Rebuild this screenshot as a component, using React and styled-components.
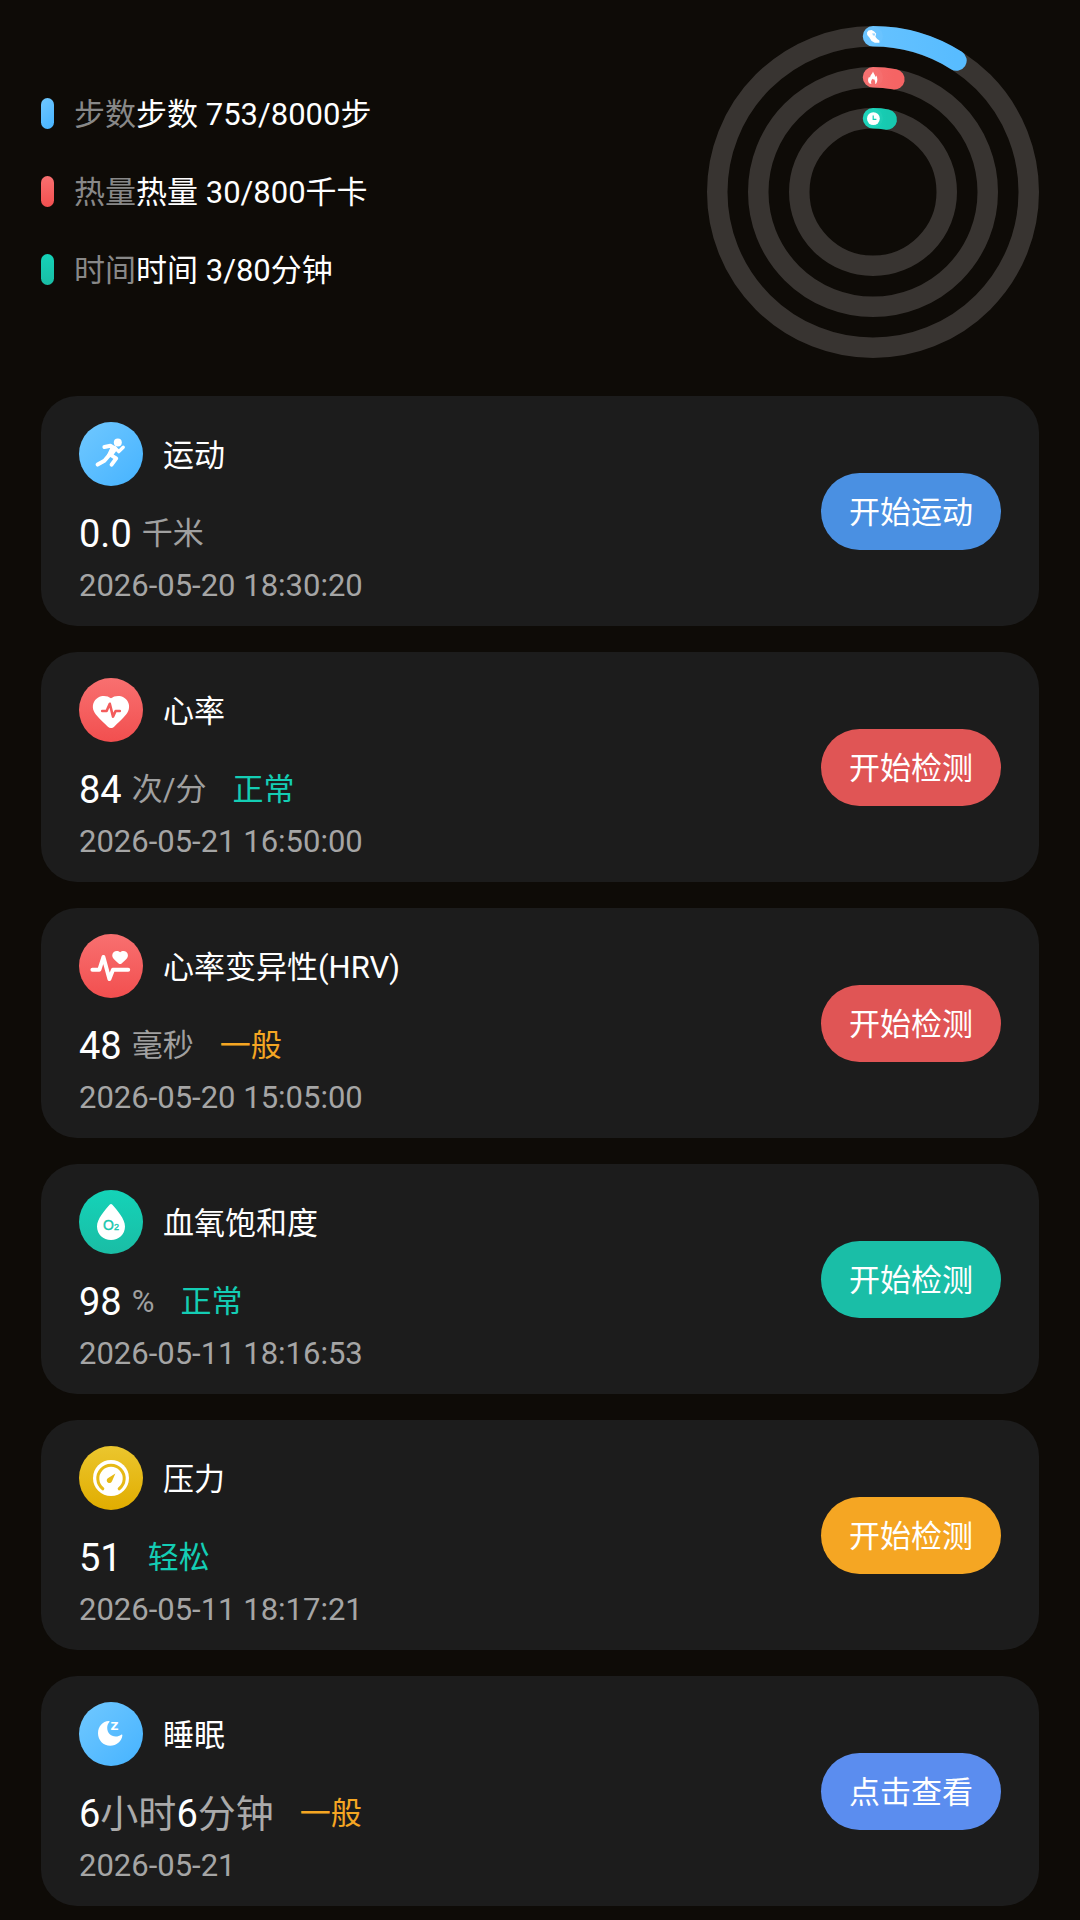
import React from 'react';
import styled, { createGlobalStyle } from 'styled-components';

const GlobalStyle = createGlobalStyle`
  * {
    box-sizing: border-box;
  }

  body {
    margin: 0;
    background: #0e0b07;
    color: #fff;
    font-family: Roboto, "Noto Sans CJK SC", sans-serif;
    font-size: 31px;
  }
`;

const GRADIENTS = {
  blue: 'linear-gradient(135deg, #70c8ff, #46b3ff)',
  red: 'linear-gradient(180deg, #f87070, #f24f4f)',
  teal: 'linear-gradient(180deg, #14d3b8, #1abda5)',
  yellow: 'linear-gradient(180deg, #ebc62e, #e1ad00)',
};

const goals = [
  { label: '步数', text: '753/8000步', tone: 'blue' },
  { label: '热量', text: '30/800千卡', tone: 'red' },
  { label: '时间', text: '3/80分钟', tone: 'teal' },
];

// radius and end angle (degrees, clockwise from the top) of each ring
const rings = [
  { id: 'steps', radius: 155.75, angle: 32.4, from: '#65c2ff', to: '#58bcff' },
  { id: 'heat', radius: 114.75, angle: 10.75, from: '#f66c6c', to: '#f56464' },
  { id: 'time', radius: 73.75, angle: 10.75, from: '#15d2b8', to: '#17c9b0' },
];

const RunIcon = () => (
  <svg viewBox="0 0 64 64" fill="none" stroke="#fff" strokeLinecap="round" strokeLinejoin="round" aria-hidden>
    <circle cx="38.8" cy="20.4" r="4" fill="#fff" stroke="none" />
    <path d="M25.4 25L31.4 23.8L36 26.4" strokeWidth="4" />
    <path d="M35.8 25.6L39.8 29.6L44.2 25.2" strokeWidth="3.4" />
    <path d="M32.4 25.4L36.6 28.6L32.6 34L28.8 33Z" fill="#fff" strokeWidth="1.6" />
    <path d="M30 33.4L25.4 38.8L18.6 42.6" strokeWidth="4" />
    <path d="M32.4 33.4L37.2 36.4L32.6 42.6" strokeWidth="4" />
  </svg>
);

const HeartIcon = () => (
  <svg viewBox="0 0 64 64" fill="none" aria-hidden>
    <path
      d="M32 20.3C28.8 17.6 23.4 17 19.2 19.4C14.4 22.2 12.6 28 14.8 33C16.6 37.2 22.8 43 28.6 48.4C30.8 50.5 33.2 50.5 35.4 48.4C41.2 43 47.4 37.2 49.2 33C51.4 28 49.6 22.2 44.8 19.4C40.6 17 35.2 17.6 32 20.3Z"
      fill="#fff"
    />
    <path
      d="M23.2 33H27.6L30.8 25.8L34 38.6L36.6 33H40.8"
      stroke="#f35c5c"
      strokeWidth="2.6"
      strokeLinecap="round"
      strokeLinejoin="round"
    />
  </svg>
);

const HrvIcon = () => (
  <svg viewBox="0 0 64 64" fill="none" aria-hidden>
    <path
      d="M13.4 35.7H20.4L24.4 23L30.4 45L34 35.7H49.2"
      stroke="#fff"
      strokeWidth="4"
      strokeLinecap="round"
      strokeLinejoin="round"
    />
    <path
      d="M41.1 18.2C39.4 16.6 36.6 16.4 34.8 18C32.8 19.8 32.8 22.6 34.4 24.6C35.8 26.4 37.8 27.8 39.6 29.4C40.6 30.2 41.6 30.2 42.6 29.4C44.4 27.8 46.4 26.4 47.8 24.6C49.4 22.6 49.4 19.8 47.4 18C45.6 16.4 42.8 16.6 41.1 18.2Z"
      fill="#fff"
    />
  </svg>
);

const OxygenIcon = () => (
  <svg viewBox="0 0 64 64" aria-hidden>
    <path
      d="M30.6 14.8C31.4 13.7 32.6 13.7 33.4 14.8C38.4 20.6 46 29 46 36.4C46 44.2 39.8 50 32 50C24.2 50 18 44.2 18 36.4C18 29 25.6 20.6 30.6 14.8Z"
      fill="#fff"
    />
    <text x="24" y="40" fill="#18c7ae" stroke="#18c7ae" strokeWidth="0.4" fontFamily="Liberation Sans, sans-serif" fontSize="14">
      O<tspan fontSize="9">2</tspan>
    </text>
  </svg>
);

const GaugeIcon = () => (
  <svg viewBox="0 0 64 64" fill="none" aria-hidden>
    <circle cx="32" cy="32" r="18" fill="#fff" />
    <path d="M23.8 42.8A13.2 13.2 0 1 1 40.2 42.8" stroke="#e6b915" strokeWidth="3" strokeLinecap="round" />
    <path d="M36.4 27.4L33 35.2A2.7 2.7 0 1 1 28.8 32.2Z" fill="#e6b915" />
  </svg>
);

const SleepIcon = () => (
  <svg viewBox="0 0 64 64" aria-hidden>
    <path
      d="M29.8 19C23.6 19.2 19 24.6 19 31.2C19 38.2 24.4 43.7 31.2 43.7C37.4 43.7 42.8 39.4 43.4 33.2C43.4 32.4 42.8 32.3 42.2 32.7C40.6 33.9 38.8 34.5 36.8 34.5C31.6 34.5 28.2 30.8 28.2 25.8C28.2 23.6 28.8 21.8 30.2 20.2C30.8 19.5 30.6 19 29.8 19Z"
      fill="#fff"
    />
    <text x="31.4" y="28" fill="#fff" fontFamily="DejaVu Sans, sans-serif" fontWeight="700" fontSize="11">Z</text>
  </svg>
);

const cards = [
  {
    title: '运动',
    tone: 'blue',
    icon: <RunIcon />,
    parts: [{ value: '0.0' }, { unit: '千米' }],
    time: '2026-05-20 18:30:20',
    action: '开始运动',
    color: '#4a90e2',
  },
  {
    title: '心率',
    tone: 'red',
    icon: <HeartIcon />,
    parts: [{ value: '84' }, { unit: '次/分' }],
    status: '正常',
    time: '2026-05-21 16:50:00',
    action: '开始检测',
    color: '#e05555',
  },
  {
    title: '心率变异性(HRV)',
    tone: 'red',
    icon: <HrvIcon />,
    parts: [{ value: '48' }, { unit: '毫秒' }],
    status: '一般',
    warn: true,
    time: '2026-05-20 15:05:00',
    action: '开始检测',
    color: '#e05555',
  },
  {
    title: '血氧饱和度',
    tone: 'teal',
    icon: <OxygenIcon />,
    parts: [{ value: '98' }, { unit: '%' }],
    status: '正常',
    time: '2026-05-11 18:16:53',
    action: '开始检测',
    color: '#1abea7',
  },
  {
    title: '压力',
    tone: 'yellow',
    icon: <GaugeIcon />,
    parts: [{ value: '51' }],
    status: '轻松',
    time: '2026-05-11 18:17:21',
    action: '开始检测',
    color: '#f5a623',
  },
  {
    title: '睡眠',
    tone: 'blue',
    icon: <SleepIcon />,
    parts: [{ value: '6', suffix: '小时' }, { value: '6', suffix: '分钟' }],
    joined: true,
    status: '一般',
    warn: true,
    time: '2026-05-21',
    action: '点击查看',
    color: '#5b8def',
  },
];

const arcPath = (r, angle) => {
  const a = (angle * Math.PI) / 180;
  return `M166 ${166 - r}A${r} ${r} 0 0 1 ${166 + r * Math.sin(a)} ${166 - r * Math.cos(a)}`;
};

const Rings = () => (
  <RingChart viewBox="0 0 332 332" fill="none" role="img" aria-label="今日目标">
    <defs>
      {rings.map((ring) => (
        <linearGradient key={ring.id} id={ring.id}>
          <stop offset="0" stopColor={ring.from} />
          <stop offset="1" stopColor={ring.to} />
        </linearGradient>
      ))}
    </defs>
    {rings.map((ring) => (
      <g key={ring.id} strokeWidth="20.5">
        <circle cx="166" cy="166" r={ring.radius} stroke="#383431" />
        <path d={arcPath(ring.radius, ring.angle)} stroke={`url(#${ring.id})`} strokeLinecap="round" />
        <circle cx="166" cy={166 - ring.radius} r="10" fill="#fff" fillOpacity="0.04" strokeWidth="0" />
      </g>
    ))}
    {/* shoe */}
    <path
      d="M160 6.4L161.4 4.6L164.6 4L167.2 5.6L169.2 7.8L168.4 10.8L170.2 13L172.4 14.4V16.8H167.8L164.6 15L162.4 11.4L160.2 9Z"
      fill="#fff"
    />
    <path d="M165.2 7.2L168 7.4L168.2 9.6L166 9.6Z" fill="#9ad6ff" />
    {/* flame */}
    <path
      d="M166 45.6C166.6 48 168.2 49 168.4 51L169.4 49.6C170.6 52 170.8 55 169.4 57.2L168 58C168.6 56 168 54.6 167 53C166.4 54 165.8 53.6 165.4 52.8C164.2 54.4 163.6 56.2 164.4 58L162 57.2C160.6 55.2 160.8 53 162 50.8L163 51.8C163 49.2 165.4 48.2 166 45.6Z"
      fill="#fff"
    />
    {/* clock */}
    <circle cx="166.4" cy="92.6" r="6.4" fill="#fff" />
    <path d="M166.2 89.4V93.4H169.4" stroke="#14cfb5" strokeWidth="1.2" />
  </RingChart>
);

const App = () => {
  return (
    <Page>
      <GlobalStyle />
      <Summary>
        <Legend>
          {goals.map((goal) => (
            <LegendItem key={goal.label}>
              <Pill $tone={goal.tone} />
              <LegendText>
                <Muted>{goal.label}</Muted>
                {goal.label} {goal.text}
              </LegendText>
            </LegendItem>
          ))}
        </Legend>
        <Rings />
      </Summary>
      <CardList>
        {cards.map((card) => (
          <Card key={card.title}>
            <div>
              <CardHead>
                <Badge $tone={card.tone}>{card.icon}</Badge>
                <Title>{card.title}</Title>
              </CardHead>
              <Reading>
                <Values $joined={card.joined}>
                  {card.parts.map((part, i) =>
                    part.unit ? (
                      <Unit key={i}>{part.unit}</Unit>
                    ) : (
                      <Value key={i}>
                        {part.value}
                        {part.suffix && <Suffix>{part.suffix}</Suffix>}
                      </Value>
                    )
                  )}
                </Values>
                {card.status && <Status $warn={card.warn}>{card.status}</Status>}
              </Reading>
              <Time>{card.time}</Time>
            </div>
            <Action type="button" $color={card.color}>{card.action}</Action>
          </Card>
        ))}
      </CardList>
    </Page>
  );
};

const Page = styled.main`
  padding: 26px 41px 14px;
`;

const Summary = styled.header`
  display: flex;
  align-items: center;
  justify-content: space-between;
  margin-bottom: 38px;
`;

const Legend = styled.ul`
  display: flex;
  flex-direction: column;
  gap: 32px;
  margin: 0;
  padding: 0 0 2px;
  list-style: none;
`;

const LegendItem = styled.li`
  display: flex;
  align-items: center;
  gap: 20px;
`;

const Pill = styled.span`
  width: 13px;
  height: 31px;
  border-radius: 7px;
  background: ${({ $tone }) => GRADIENTS[$tone]};
`;

const LegendText = styled.span`
  padding-top: 4px;
  line-height: 42px;
`;

const Muted = styled.span`
  color: #888;
`;

const RingChart = styled.svg`
  display: block;
  width: 332px;
  height: 332px;
`;

const CardList = styled.div`
  display: flex;
  flex-direction: column;
  gap: 26px;
`;

const Card = styled.section`
  display: flex;
  align-items: center;
  justify-content: space-between;
  padding: 26px 38px;
  border-radius: 36px;
  background: #1c1c1c;
`;

const CardHead = styled.div`
  display: flex;
  align-items: center;
  gap: 20px;
`;

const Badge = styled.span`
  width: 64px;
  height: 64px;
  border-radius: 50%;
  background: ${({ $tone }) => GRADIENTS[$tone]};

  svg {
    display: block;
    width: 100%;
    height: 100%;
  }
`;

const Title = styled.h2`
  margin: 0;
  padding-top: 4px;
  font-size: 31px;
  font-weight: 400;
  line-height: 42px;
`;

const Reading = styled.div`
  display: flex;
  align-items: center;
  gap: 26px;
  margin-top: 27px;
  line-height: 42px;
`;

const Values = styled.div`
  display: flex;
  align-items: center;
  gap: ${({ $joined }) => ($joined ? '0' : '10px')};
`;

const Value = styled.span`
  font-size: 38px;
`;

const Suffix = styled.span`
  color: #aaa;
`;

const Unit = styled.span`
  color: #a0a0a0;
`;

const Status = styled.span`
  color: ${({ $warn }) => ($warn ? '#f5a623' : '#14cdb4')};
`;

const Time = styled.div`
  margin-top: 17px;
  color: #a5a5a5;
  line-height: 28px;
`;

const Action = styled.button`
  padding: 2px 28px 0;
  border: none;
  border-radius: 39px;
  background: ${({ $color }) => $color};
  color: #fff;
  font: inherit;
  line-height: 75px;
  cursor: pointer;
`;

export default App;
